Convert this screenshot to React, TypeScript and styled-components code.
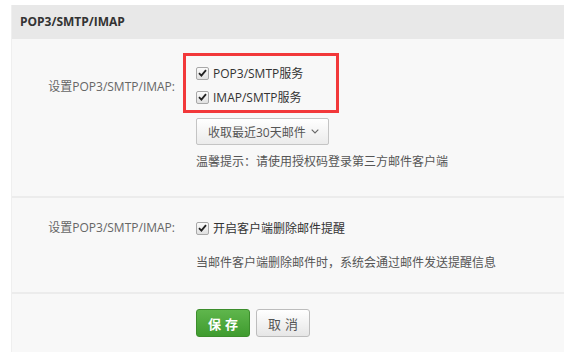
import React from 'react'
import styled, { createGlobalStyle } from 'styled-components'

const Global = createGlobalStyle`
  html, body {
    margin: 0;
    padding: 0;
    background: #ffffff;
    font-family: "Open Sans", "Noto Sans CJK SC", "Noto Sans", sans-serif;
    font-size: 12px;
    color: #333;
  }
`

const Page = styled.div`
  padding: 5px 0 0 11px;
  height: 347px;
  overflow: hidden;
`

const Panel = styled.div`
  background: #f8f8f8;
  border-left: 1px solid #efefef;
  height: 100%;
`

const Header = styled.div`
  height: 34px;
  line-height: 34px;
  background: #e8e8e8;
  padding-left: 8px;
  font-weight: bold;
  font-size: 12px;
  color: #333;
`

const Section = styled.div<{ pt: number; pb: number; last?: boolean }>`
  display: grid;
  grid-template-columns: 163px 1fr;
  column-gap: 21px;
  padding: ${(p) => p.pt}px 0 ${(p) => p.pb}px;
  border-bottom: ${(p) => (p.last ? 'none' : '2px solid #ececec')};
`

const Label = styled.div<{ top: number }>`
  text-align: right;
  color: #666;
  line-height: 24px;
  padding-top: ${(p) => p.top}px;
  white-space: nowrap;
`

const Content = styled.div`
  display: flex;
  flex-direction: column;
  align-items: flex-start;
`

const Highlight = styled.div`
  border: 3px solid #f2383a;
  margin-left: -13px;
  width: 140px;
  padding: 5px 0 0 10px;
  height: 49px;
  box-sizing: content-box;
`

const Row = styled.label`
  display: flex;
  align-items: center;
  height: 24px;
  gap: 4px;
  color: #333;
  white-space: nowrap;
`

const Box = styled.span`
  width: 11px;
  height: 11px;
  border: 1px solid #a8a8a8;
  border-radius: 2px;
  background: linear-gradient(#fbfbfb, #e0e0e0);
  display: inline-flex;
  align-items: center;
  justify-content: center;
`

const Select = styled.button`
  margin-top: 5px;
  width: 133px;
  height: 27px;
  border: 1px solid #c4c4c4;
  border-radius: 2px;
  background: linear-gradient(#ffffff, #ebebeb);
  font: inherit;
  color: #555;
  display: flex;
  align-items: center;
  justify-content: space-between;
  padding: 0 9px 0 11px;
  box-sizing: border-box;
`

const Note = styled.div<{ mt: number }>`
  margin-top: ${(p) => p.mt}px;
  line-height: 18px;
  color: #555;
  white-space: nowrap;
`

const Actions = styled.div`
  display: flex;
  gap: 6px;
`

const Btn = styled.button<{ primary?: boolean }>`
  width: 54px;
  height: 28px;
  border-radius: 3px;
  font: inherit;
  font-size: 13px;
  letter-spacing: 4px;
  text-indent: 4px;
  font-weight: ${(p) => (p.primary ? 'bold' : 'normal')};
  color: ${(p) => (p.primary ? '#fff' : '#555')};
  border: 1px solid ${(p) => (p.primary ? '#3c8d2c' : '#bdbdbd')};
  background: ${(p) =>
    p.primary
      ? 'linear-gradient(#5fb64c, #3f9b2f)'
      : 'linear-gradient(#ffffff, #e6e6e6)'};
  padding: 0;
`

const Check = () => (
  <Box>
    <svg width="9" height="8" viewBox="0 0 9 8">
      <path d="M1 4.2 L3.4 6.6 L8 1.2" fill="none" stroke="#222" strokeWidth="1.8" />
    </svg>
  </Box>
)

const Chevron = () => (
  <svg width="8" height="5" viewBox="0 0 8 5">
    <path d="M0.7 0.7 L4 4 L7.3 0.7" fill="none" stroke="#666" strokeWidth="1.1" />
  </svg>
)

export default function App() {
  return (
    <Page>
      <Global />
      <Panel>
        <Header>POP3/SMTP/IMAP</Header>
        <Section pt={14} pb={25}>
          <Label top={22}>设置POP3/SMTP/IMAP:</Label>
          <Content>
            <Highlight>
              <Row>
                <Check />
                POP3/SMTP服务
              </Row>
              <Row>
                <Check />
                IMAP/SMTP服务
              </Row>
            </Highlight>
            <Select>
              收取最近30天邮件
              <Chevron />
            </Select>
            <Note mt={8}>温馨提示：请使用授权码登录第三方邮件客户端</Note>
          </Content>
        </Section>
        <Section pt={18} pb={20}>
          <Label top={0}>设置POP3/SMTP/IMAP:</Label>
          <Content>
            <Row>
              <Check />
              开启客户端删除邮件提醒
            </Row>
            <Note mt={14}>当邮件客户端删除邮件时，系统会通过邮件发送提醒信息</Note>
          </Content>
        </Section>
        <Section pt={15} pb={0} last>
          <div />
          <Actions>
            <Btn primary>保存</Btn>
            <Btn>取消</Btn>
          </Actions>
        </Section>
      </Panel>
    </Page>
  )
}
